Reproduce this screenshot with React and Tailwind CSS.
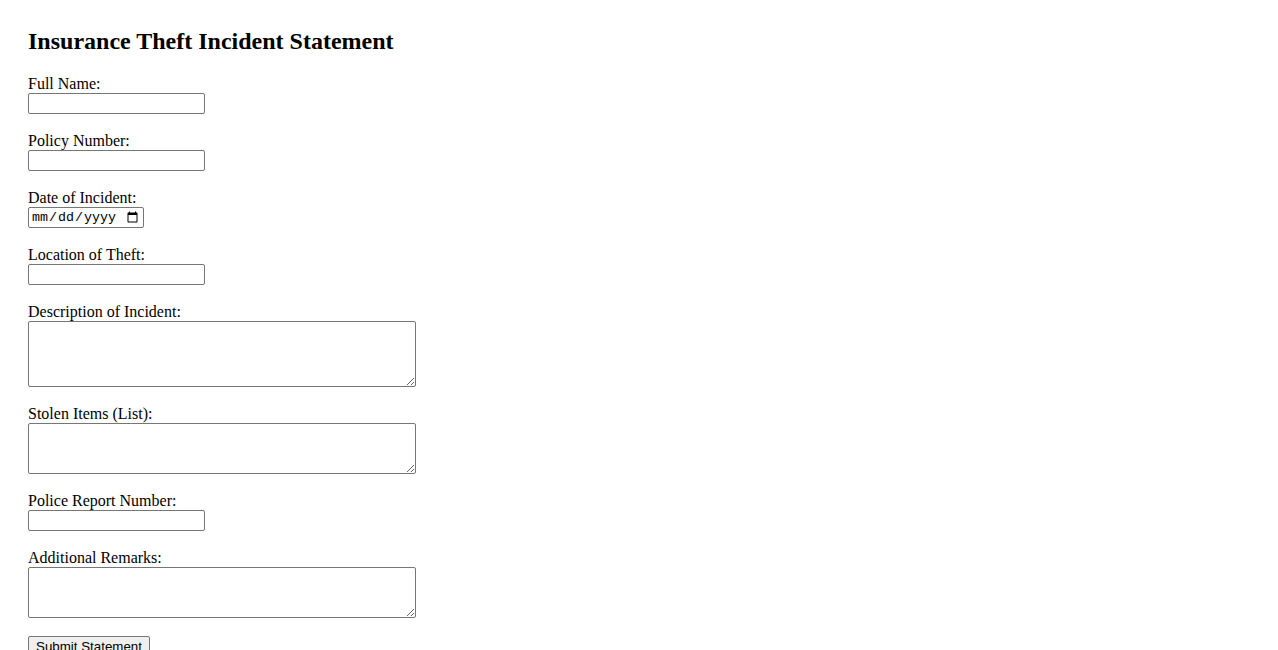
const INPUT = 'block h-[21px] w-[177px] border border-[#767676] rounded-[2px] bg-white px-[2px] py-[1px] text-[13.33px] font-["Liberation_Sans",sans-serif]'
const AREA = 'block w-[388px] border border-[#767676] rounded-[2px] bg-white px-[2px] py-[2px] text-[13.33px] leading-[15px] font-["Liberation_Mono",monospace] resize'

function Field({ label, children }) {
  return (
    <div className="mb-[18px]">
      <label className="block leading-[18px]">{label}</label>
      {children}
    </div>
  )
}

export default function App() {
  return (
    <div className="min-h-screen bg-white px-[28px] pt-[27px] text-[16px] text-black font-['Liberation_Serif',serif]">
      <h2 className="text-[24px] font-bold leading-[28px] mb-[20px]">Insurance Theft Incident Statement</h2>
      <form onSubmit={e => e.preventDefault()}>
        <Field label="Full Name:">
          <input type="text" className={INPUT} />
        </Field>
        <Field label="Policy Number:">
          <input type="text" className={INPUT} />
        </Field>
        <Field label="Date of Incident:">
          <input type="date" className="block h-[21px] w-[116px] border border-[#767676] rounded-[2px] bg-white px-[2px] py-0 text-[13.33px] font-['Liberation_Mono',monospace]" />
        </Field>
        <Field label="Location of Theft:">
          <input type="text" className={INPUT} />
        </Field>
        <Field label="Description of Incident:">
          <textarea rows={4} className={`${AREA} h-[66px]`} />
        </Field>
        <Field label="Stolen Items (List):">
          <textarea rows={3} className={`${AREA} h-[51px]`} />
        </Field>
        <Field label="Police Report Number:">
          <input type="text" className={INPUT} />
        </Field>
        <Field label="Additional Remarks:">
          <textarea rows={3} className={`${AREA} h-[51px]`} />
        </Field>
        <button type="submit" className="block h-[21px] border border-[#767676] rounded-[2px] bg-[#efefef] px-[7px] text-[13.33px] leading-[15px] font-['Liberation_Sans',sans-serif]">
          Submit Statement
        </button>
      </form>
    </div>
  )
}
